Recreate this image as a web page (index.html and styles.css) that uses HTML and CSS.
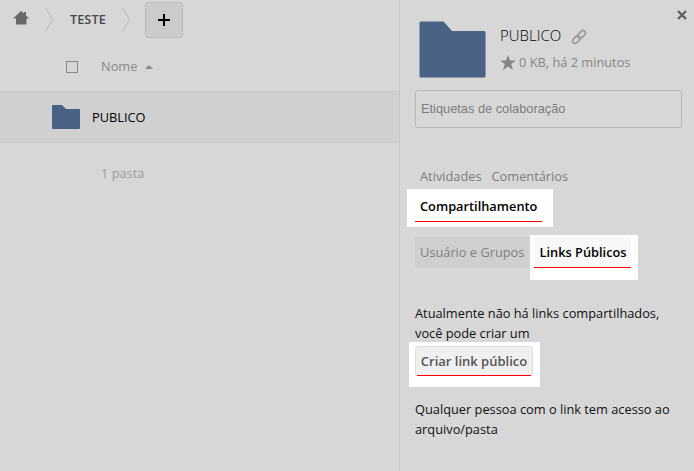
FILE: index.html
```html
<!DOCTYPE html>
<html lang="pt-BR">
<head>
<meta charset="utf-8">
<title>Arquivos - TESTE</title>
<link rel="stylesheet" href="styles.css">
</head>
<body>
<main class="files">
  <nav class="crumbs">
    <svg class="home" width="16" height="14" viewBox="0 0 16 14"><path d="M8 0 11 2.600V1h2v3.400L16 7.500H13.500V13.500H3V7.500H0Z"/></svg>
    <svg class="chevron" width="9" height="26" viewBox="0 0 9 26"><path d="M.5.5 7.500 12.500.5 24.500"/></svg>
    <span class="crumb">TESTE</span>
    <svg class="chevron" width="9" height="26" viewBox="0 0 9 26"><path d="M.5.5 7.500 12.500.5 24.500"/></svg>
    <button class="add" aria-label="Novo"><svg width="12" height="12" viewBox="0 0 12 12"><path d="M5 0h2v5h5v2H7v5H5V7H0V5h5z"/></svg></button>
  </nav>
  <div class="list-head"><span class="checkbox"></span><span class="column">Nome</span><svg class="sort" width="8" height="4" viewBox="0 0 8 4"><path d="M0 4 4 0 8 4z"/></svg></div>
  <div class="file-row">
    <svg class="folder" width="28" height="24" viewBox="0 0 28 24"><path d="M.7 0H10L14 4H27.300Q28 4 28 4.700V23.300Q28 24 27.300 24H.7Q0 24 0 23.300V.7Q0 0 .7 0Z"/></svg>
    <span>PUBLICO</span>
  </div>
  <div class="summary">1 pasta</div>
</main>
<aside class="details">
  <svg class="close" width="10" height="10" viewBox="0 0 10 10"><path d="M1 1 9 9M9 1 1 9"/></svg>
  <header class="info">
    <svg class="folder" width="67" height="57" viewBox="0 0 67 57"><path d="M2 .5H24.500L33 10H65Q66.500 10 66.500 11.500V55Q66.500 56.500 65 56.500H2Q.5 56.500 .5 55V2Q.5.5 2 .5Z"/></svg>
    <div>
      <div class="title">PUBLICO<svg class="link" width="16" height="16" viewBox="0 0 16 16"><g transform="rotate(-45 8 8)"><rect x="0" y="5.500" width="8.500" height="5" rx="2.500"/><rect x="7.500" y="5.500" width="8.500" height="5" rx="2.500"/></g></svg></div>
      <div class="meta"><svg width="16" height="15" viewBox="0 0 16 15"><path d="M8 0 10 5.500H16L11.200 9.100 13 15 8 11.500 3 15 4.800 9.100 0 5.500H6Z"/></svg>0 KB, há 2 minutos</div>
    </div>
  </header>
  <div class="tags">Etiquetas de colaboração</div>
  <div class="tabs"><span>Atividades</span><span>Comentários</span></div>
  <div class="highlight share"><span class="active-tab">Compartilhamento</span></div>
  <div class="subtabs">
    <span class="subtab">Usuário e Grupos</span>
    <div class="highlight public"><span class="subtab-active">Links Públicos</span></div>
  </div>
  <p class="notice">Atualmente não há links compartilhados,<br>você pode criar um</p>
  <div class="highlight create"><button class="create-btn">Criar link público</button></div>
  <p class="hint">Qualquer pessoa com o link tem acesso ao<br>arquivo/pasta</p>
</aside>
</body>
</html>
```
FILE: styles.css
```css
* { box-sizing: border-box; }
body {
  margin: 0;
  display: flex;
  height: 471px;
  overflow: hidden;
  background: #d7d7d7;
  font: 12.8px/20px "Open Sans", sans-serif;
  color: #111;
}
svg { display: block; flex: none; }
p { margin: 0; white-space: nowrap; }
.files { width: 399px; flex: none; }
.folder { fill: #486184; }

.crumbs { display: flex; height: 44px; padding-left: 13px; }
.home { margin-top: 11px; fill: #696969; }
.chevron { margin: 7px 0 0 16px; fill: none; stroke: #bababa; }
.crumb { margin: 9px 0 0 16px; width: 36px; font-weight: 600; color: #484848; }
.crumb + .chevron { margin-left: 16px; }
.add {
  display: grid;
  place-items: center;
  width: 38px;
  height: 36px;
  margin: 2px 0 0 14px;
  padding: 0;
  background: #cbcbcb;
  border: 1px solid #b9b9b9;
  border-radius: 3px;
}

.list-head { display: flex; align-items: center; height: 47px; padding: 0 0 1px 66px; color: #8a8a8a; }
.checkbox { width: 12px; height: 12px; margin-right: 23px; border: 1px solid #888; }
.column { padding-bottom: 2px; }
.sort { margin-left: 8px; fill: #8a8a8a; }
.file-row {
  display: flex;
  align-items: center;
  gap: 12px;
  height: 52px;
  padding-left: 52px;
  background: #d0d0d0;
  border: solid #c8c8c8;
  border-width: 1px 0;
  color: #000;
}
.summary { padding: 20px 0 0 101px; color: #9c9c9c; }

.details { position: relative; width: 295px; border-left: 1px solid #c6c6c6; padding-left: 15px; }
.close { position: absolute; top: 10px; right: 7px; stroke: #606060; stroke-width: 2.4; }
.info { display: flex; gap: 14px; height: 90px; padding: 21px 0 0 4px; }
.title { display: flex; margin-top: 4px; font-size: 15px; font-weight: 300; color: #000; }
.link { margin: 4px 0 0 10px; fill: none; stroke: #999; stroke-width: 1.7; }
.meta { display: flex; align-items: center; gap: 3px; margin-top: 7px; color: #858585; white-space: nowrap; }
.meta svg { fill: #858585; }
.tags {
  width: 267px;
  height: 38px;
  padding-left: 5px;
  border: 1px solid #b6b6b6;
  border-radius: 3px;
  font: 12.8px/36px "Liberation Sans", sans-serif;
  color: #7d7d7d;
}
.tabs { display: flex; gap: 10px; height: 61px; padding: 38px 0 0 5px; color: #7c7c7c; }
.highlight { background: #fff; }
.share { width: 146px; height: 38px; margin-left: -8px; padding: 0 11px 5px 8px; }
.active-tab {
  display: block;
  height: 33px;
  padding: 7px 0 0 5px;
  border-bottom: 1px solid #f00;
  font-weight: 600;
  color: #000;
  white-space: nowrap;
}
.subtabs { display: flex; gap: 1px; height: 53px; padding-top: 8px; }
.subtab { width: 114px; height: 31px; margin-top: 2px; padding: 5px 0 0 5px; background: #cfcfcf; color: #7f7f7f; white-space: nowrap; }
.public { width: 108px; height: 45px; padding: 2px 7px 0 4px; }
.subtab-active {
  display: block;
  height: 31px;
  padding: 5px 0 0 5.5px;
  background: #f8f8f8;
  border-bottom: 1px solid #f00;
  font-weight: 600;
  color: #000;
  white-space: nowrap;
}
.notice { height: 62px; padding-top: 23px; }
.create { width: 131px; height: 45px; margin-left: -6px; padding: 4px 7px 0 6px; }
.create-btn {
  position: relative;
  display: block;
  width: 118px;
  height: 30px;
  padding: 0;
  background: #f0f0f0;
  border: 1px solid #ddd;
  border-radius: 3px;
  font: 600 13px/20px "Open Sans", sans-serif;
  color: #555;
  white-space: nowrap;
}
.create-btn::after { content: ""; position: absolute; left: 1px; right: 1px; bottom: -1px; height: 1px; background: #f00; }
.hint { padding-top: 12px; }
```
